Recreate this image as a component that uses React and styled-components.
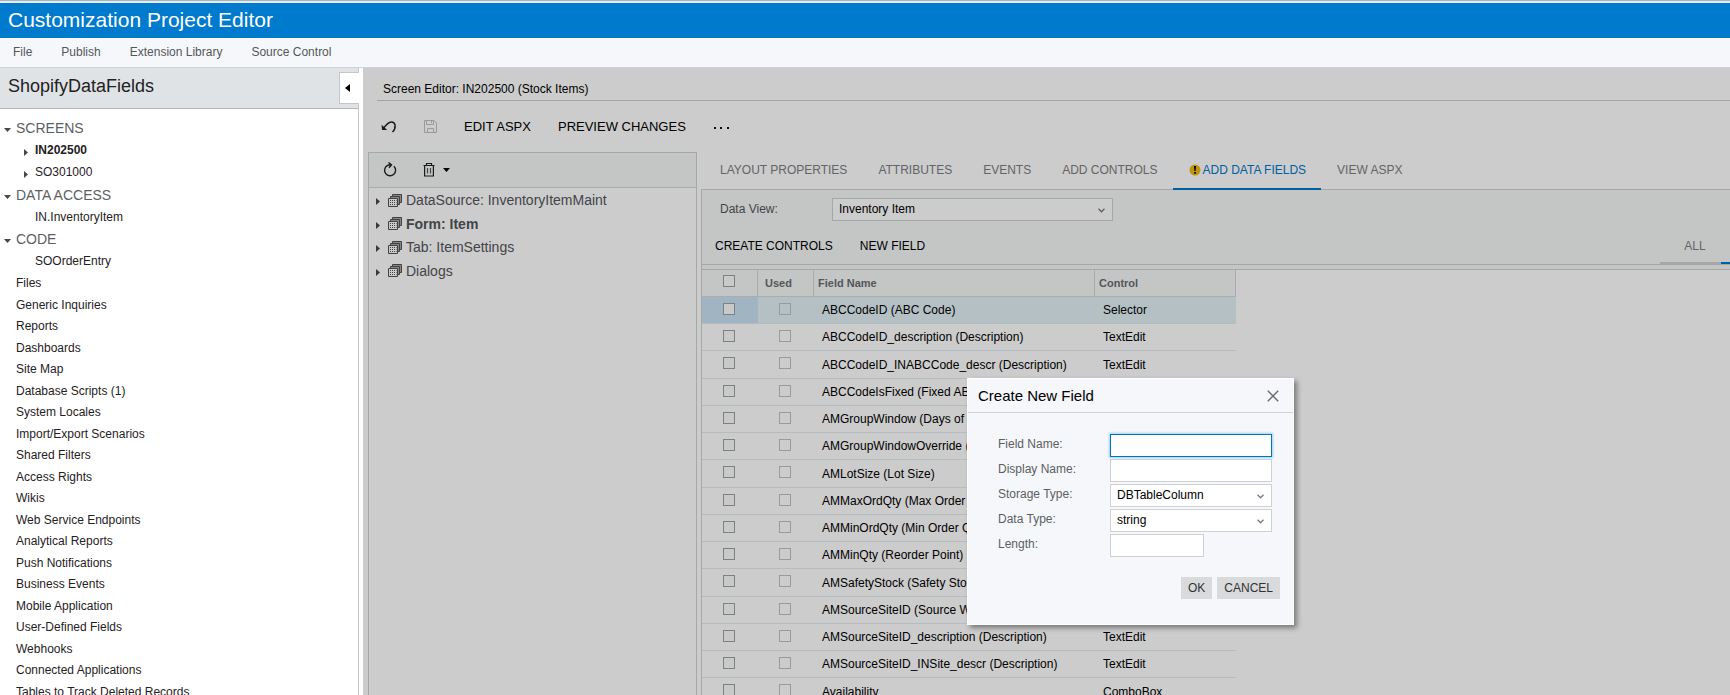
import React from 'react'
import styled, { createGlobalStyle } from 'styled-components';

const GlobalStyle = createGlobalStyle`
  * {
    box-sizing: border-box;
  }
  html, body, #root {
    height: 100%;
  }
  body {
    margin: 0;
    overflow: hidden;
    background: #ffffff;
    color: #000000;
    font-family: 'Liberation Sans', Arial, sans-serif;
    font-size: 12px;
  }
  button, input, select {
    font-family: inherit;
    font-size: inherit;
    color: inherit;
    border-radius: 0;
    outline: none;
  }
`;

const Page = styled.div`
  display: flex;
  flex-direction: column;
  height: 100vh;
  overflow: hidden;
  border-top: 1px solid #adb0b5;
`;

const TitleBar = styled.header`
  flex: none;
  height: 37px;
  padding: 0 8px;
  border-top: 2px solid #e2edf6;
  background: #007acc;
  color: #ffffff;
`;

const AppTitle = styled.h1`
  margin: 0;
  font-size: 21px;
  line-height: 34px;
  font-weight: 400;
`;

const MenuBar = styled.nav`
  flex: none;
  display: flex;
  gap: 29px;
  height: 30px;
  padding: 0 13px;
  border-bottom: 1px solid #d0d3d6;
  background: #f5f7fa;
`;

const MenuButton = styled.button`
  padding: 0 0 2px;
  border: 0;
  background: none;
  color: #555759;
`;

const Workspace = styled.div`
  flex: 1;
  display: flex;
  min-height: 0;
`;

const Sidebar = styled.aside`
  flex: none;
  width: 359px;
  margin-right: 4px;
  border-right: 1px solid #c4c7ca;
`;

const ProjectBar = styled.div`
  position: relative;
  height: 41px;
  padding: 0 8px;
  border-bottom: 1px solid #b4b7ba;
  background: #dfe3e6;
`;

const ProjectName = styled.h2`
  margin: 0;
  font-size: 18px;
  line-height: 36px;
  font-weight: 400;
  color: #1f2123;
`;

const CollapseButton = styled.button`
  position: absolute;
  top: 4px;
  right: -1px;
  display: flex;
  align-items: center;
  width: 20px;
  height: 32px;
  padding: 0 5px;
  border: 1px solid #c4c7ca;
  border-right: 0;
  background: #ffffff;
`;

const Nav = styled.ul`
  margin: 0;
  padding: 8px 0 0;
  list-style: none;
`;

const NavItem = styled.li`
  display: flex;
  align-items: center;
  height: ${({ $kind }) => ($kind === 'page' ? '21px' : '22px')};
  padding-left: ${({ $kind }) => ($kind === 'child' ? '24px' : '4px')};

  &:nth-child(even) {
    height: 22px;
  }
  &:nth-child(4) {
    height: 23px;
  }
`;

const NavArrow = styled.span`
  flex: none;
  display: flex;
  width: ${({ $kind }) => ($kind === 'child' ? '11px' : '12px')};
  padding-top: 4px;
`;

const NavLink = styled.a`
  font-size: ${({ $kind }) => ($kind === 'group' ? '14px' : '12px')};
  line-height: 20px;
  font-weight: ${({ $bold }) => ($bold ? 700 : 400)};
  color: ${({ $kind }) => ($kind === 'group' ? '#5c5f62' : '#1f2123')};
  text-decoration: none;
  white-space: nowrap;
`;

const Frame = styled.main`
  position: relative;
  flex: 1;
  min-width: 0;
  display: flex;
  flex-direction: column;
  padding-left: 5px;
  overflow: hidden;
  background: #ffffff;
`;

const ScreenTitle = styled.h3`
  flex: none;
  margin: 0 0 0 9px;
  padding: 10px 6px 0;
  height: 33px;
  border-bottom: 1px solid #cdcdcd;
  font-size: 12px;
  line-height: 22px;
  font-weight: 400;
`;

const Toolbar = styled.div`
  flex: none;
  display: flex;
  align-items: center;
  height: 51px;
  padding-left: 13px;
`;

const IconButton = styled.button`
  display: flex;
  align-items: center;
  gap: 8px;
  margin-right: 26px;
  padding: 0;
  border: 0;
  background: none;
`;

const ToolButton = styled.button`
  margin-right: 27px;
  padding: 0;
  border: 0;
  background: none;
  font-size: ${({ $size }) => $size || '12px'};
  line-height: 16px;
`;

const Columns = styled.div`
  flex: 1;
  display: flex;
  gap: 4px;
  min-height: 0;
`;

const TreePanel = styled.section`
  flex: none;
  width: 329px;
  border: 1px solid #cfd2d4;
  border-bottom: 0;
`;

const TreeToolbar = styled.div`
  display: flex;
  align-items: center;
  height: 35px;
  padding: 0 0 1px 14px;
  border-bottom: 1px solid #d4d7d9;
  background: #f5f8f8;
`;

const TreeList = styled.ul`
  margin: 0;
  padding: 0;
  list-style: none;
`;

const TreeItem = styled.li`
  display: flex;
  align-items: center;
  height: 24px;
  padding-left: 7px;
  font-size: 14px;
  font-weight: ${({ $bold }) => ($bold ? 700 : 400)};
  color: #53565a;

  &:nth-child(even) {
    height: 23px;
  }

  svg:first-child {
    margin-top: 3px;
  }
  svg:last-of-type {
    margin: 0 4px 0 8px;
  }
`;

const Editor = styled.section`
  flex: 1;
  min-width: 0;
  display: flex;
  flex-direction: column;
`;

/* the active tab's underline sits on the top border of the tab body */
const Tabs = styled.div`
  position: relative;
  z-index: 1;
  flex: none;
  display: flex;
  height: 38px;
  margin-bottom: -1px;
  padding-left: 3px;
`;

const Tab = styled.button`
  display: flex;
  align-items: center;
  gap: 2px;
  padding: 0 15px 0 16px;
  border: 0;
  border-bottom: ${({ $active }) => ($active ? '2px solid #0078c8' : '2px solid transparent')};
  background: none;
  color: ${({ $active }) => ($active ? '#0078c8' : '#7b7e81')};
`;

const TabBody = styled.div`
  flex: 1;
  min-height: 0;
  display: flex;
  flex-direction: column;
  border: 1px solid #cfd2d4;
  border-width: 1px 0 0 1px;
`;

const FilterRow = styled.div`
  flex: none;
  display: flex;
  align-items: center;
  height: 39px;
  padding-left: 18px;
  background: #f5f8f8;
`;

const FilterLabel = styled.label`
  width: 112px;
  padding-bottom: 2px;
  color: #53565a;
`;

const SelectBox = styled.div`
  position: relative;
  display: flex;
  width: ${({ $width }) => $width};

  svg {
    position: absolute;
    top: 50%;
    right: 8px;
    margin-top: -2px;
    pointer-events: none;
  }
`;

const Select = styled.select`
  appearance: none;
  width: 100%;
  height: 23px;
  padding: 0 6px 2px;
  border: 1px solid #cfd2d4;
  background: #ffffff;
  color: #000000;
`;

const GridToolbar = styled.div`
  flex: none;
  display: flex;
  align-items: center;
  height: 36px;
  padding-left: 13px;
  border-bottom: 1px solid #cfd2d4;
  background: #f5f8f8;

  ${ToolButton} {
    padding-bottom: 2px;
  }
`;

const Scopes = styled.div`
  display: flex;
  align-self: stretch;
  margin-left: auto;
`;

const Scope = styled.button`
  min-width: ${({ $active }) => ($active ? '9px' : '61px')};
  padding: 0 0 0 9px;
  border: 0;
  border-bottom: 2px solid ${({ $active }) => ($active ? '#0078c8' : '#cfd2d4')};
  background: none;
  color: #7b7e81;
`;

const GridArea = styled.div`
  flex: 1;
  min-height: 0;
  overflow: hidden;
  border-top: 4px solid #f5f8f8;
`;

const GridInner = styled.div`
  border-top: 1px solid #cfd2d4;
`;

const Grid = styled.table`
  width: 534px;
  table-layout: fixed;
  border-collapse: separate;
  border-spacing: 0;
`;

const HeadCell = styled.th`
  width: ${({ $width }) => $width};
  height: 27px;
  padding: ${({ $center }) => ($center ? '0 2px 5px 0' : '0 4px 1px')};
  border: 1px solid #d4d9db;
  border-width: 0 1px 1px 0;
  background: #f5f8f8;
  font-size: 11px;
  font-weight: 700;
  text-align: ${({ $center }) => ($center ? 'center' : 'left')};
  color: #6a6d70;
`;

const Row = styled.tr`
  height: 27px;
  background: ${({ $selected }) => ($selected ? '#e3f1f7' : '#ffffff')};

  &:nth-child(4n + 3) {
    height: 28px;
  }

  td:first-child {
    background: ${({ $selected }) => ($selected ? '#c8e2f2' : 'transparent')};
  }
`;

const Cell = styled.td`
  padding: ${({ $center }) => ($center ? '0 2px 3px 0' : '0 8px')};
  border-bottom: 1px solid #e0ecee;
  text-align: ${({ $center }) => ($center ? 'center' : 'left')};
  white-space: nowrap;
`;

const Check = styled.input`
  appearance: none;
  display: block;
  width: 12px;
  height: 12px;
  margin: 0 auto;
  border: 1px solid ${({ disabled }) => (disabled ? '#bfc2c4' : '#9ea1a3')};
  background: ${({ disabled }) => (disabled ? 'transparent' : '#fbfcfc')};
`;

const Dimmer = styled.div`
  position: absolute;
  z-index: 2;
  inset: 0;
  background: rgba(0, 0, 0, 0.2);
`;

const Dialog = styled.div`
  position: absolute;
  z-index: 3;
  top: 310px;
  left: 604px;
  width: 327px;
  padding-bottom: 25px;
  border: 1px solid #ffffff;
  background: #f5f7fa;
  box-shadow: 3px 3px 5px rgba(0, 0, 0, 0.4);
`;

const DialogHeader = styled.div`
  display: flex;
  align-items: center;
  justify-content: space-between;
  height: 34px;
  padding: 0 14px 0 10px;
  border-bottom: 1px solid #d0d3d6;
`;

const DialogTitle = styled.h4`
  margin: 0;
  font-size: 15px;
  font-weight: 400;
`;

const CloseButton = styled.button`
  display: flex;
  padding: 0;
  border: 0;
  background: none;
`;

const Form = styled.div`
  display: grid;
  grid-template-columns: 112px 162px;
  row-gap: 2px;
  padding: 21px 30px 0;
`;

const FieldLabel = styled.label`
  line-height: 21px;
  color: #5c5f62;
`;

const TextInput = styled.input`
  width: ${({ $width }) => $width || '100%'};
  height: 23px;
  padding: 0 6px;
  border: 1px solid #cdd0d3;
  background: #ffffff;

  &:focus {
    border-color: #0078b8;
    box-shadow: 0 0 2px 1px #9ed0f0;
  }
`;

const DialogButtons = styled.div`
  display: flex;
  justify-content: flex-end;
  gap: 5px;
  margin-top: 20px;
  padding-right: 13px;
`;

const DialogButton = styled.button`
  height: 22px;
  padding: 0 7px;
  border: 0;
  background: #d9dadb;
  color: #303234;
`;

const ArrowDown = ({ color = '#45484b' }) => (
  <svg width="7" height="4" viewBox="0 0 7 4"><path d="M0 0h7L3.5 4z" fill={color} /></svg>
)

const ArrowRight = () => (
  <svg width="4" height="7" viewBox="0 0 4 7"><path d="M0 0v7l4-3.5z" fill="#45484b" /></svg>
)

const ArrowLeft = () => (
  <svg width="5" height="8" viewBox="0 0 5 8"><path d="M5 0v8L0 4z" fill="#000" /></svg>
)

const Chevron = () => (
  <svg width="7" height="5" viewBox="0 0 7 5"><path d="M.5.8l3 3 3-3" fill="none" stroke="#77797b" strokeWidth="1.3" /></svg>
)

const UndoIcon = () => (
  <svg width="16" height="14" viewBox="0 0 16 14" fill="none" stroke="#222" strokeWidth="1.5">
    <path d="M2 9C4.500 5.500 7 2 10.200 2c4.600 0 5.300 6 1.300 10" />
    <path d="M.6 4.800L1 10h5.200z" fill="#222" stroke="none" />
  </svg>
)

const SaveIcon = () => (
  <svg width="15" height="15" viewBox="0 0 15 15" fill="none" stroke="#c0c0c0">
    <path d="M1.500 1.500h9.500l2.500 2.500v9.500h-12zM3.500 1.500v4h7v-4M4.500 13.500v-4h6v4M8.500 2v2" />
  </svg>
)

const RefreshIcon = () => (
  <svg width="14" height="15" viewBox="0 0 14 15" fill="none" stroke="#222" strokeWidth="1.400">
    <path d="M10.800 4.200A5.500 5.500 0 1 1 4.200 3.600C5.200 3 6 2.800 7.500 2.800M5.500.5l3 2.300-2.500 3" />
  </svg>
)

const TrashIcon = () => (
  <svg width="12" height="15" viewBox="0 0 12 15" fill="none" stroke="#222" strokeWidth="1.200">
    <path d="M.5 3.500h11M3.500 3.500v-2h5v2M1.600 3.500v10.500h8.800v-10.500" />
    <path d="M4.500 6v5.500M7.500 6v5.500" stroke="#555" />
  </svg>
)

const LayersIcon = () => (
  <svg width="14" height="13" viewBox="0 0 14 13" fill="none" stroke="#505356">
    <path d="M4.500 2.500v-2h9v8h-2M2.500 4.500v-2h9v8h-2" fill="#a5a8aa" />
    <path d="M.5 4.500h9v8h-9z" fill="#fff" />
    <path d="M2 6.500h6.500M2 8.500h6.500M2 10.500h6.500" strokeDasharray="1 1" />
  </svg>
)

const WarningIcon = () => (
  <svg width="12" height="12" viewBox="0 0 12 12">
    <circle cx="6" cy="6" r="5.500" fill="#f0b810" />
    <path d="M5 2h2l-.4 5H5.400zM5.200 8h1.600v1.800H5.200z" fill="#000" />
  </svg>
)

const CloseIcon = () => (
  <svg width="12" height="12" viewBox="0 0 12 12"><path d="M.8.8l10.400 10.400M11.200.8L.8 11.200" stroke="#6a6d70" strokeWidth="1.500" /></svg>
)

const DotsIcon = () => (
  <svg width="17" height="6" viewBox="0 0 17 6"><path d="M1 3h2v2H1zM7 3h2v2H7zM14 3h2v2h-2z" fill="#111" /></svg>
)

const menu = ['File', 'Publish', 'Extension Library', 'Source Control']

const navItems = [
  { kind: 'group', text: 'SCREENS' },
  { kind: 'child', text: 'IN202500', arrow: true, bold: true },
  { kind: 'child', text: 'SO301000', arrow: true },
  { kind: 'group', text: 'DATA ACCESS' },
  { kind: 'child', text: 'IN.InventoryItem' },
  { kind: 'group', text: 'CODE' },
  { kind: 'child', text: 'SOOrderEntry' },
  ...[
    'Files', 'Generic Inquiries', 'Reports', 'Dashboards', 'Site Map', 'Database Scripts (1)',
    'System Locales', 'Import/Export Scenarios', 'Shared Filters', 'Access Rights', 'Wikis',
    'Web Service Endpoints', 'Analytical Reports', 'Push Notifications', 'Business Events',
    'Mobile Application', 'User-Defined Fields', 'Webhooks', 'Connected Applications',
    'Tables to Track Deleted Records',
  ].map((text) => ({ kind: 'page', text })),
]

const treeItems = ['DataSource: InventoryItemMaint', 'Form: Item', 'Tab: ItemSettings', 'Dialogs']

const tabs = ['LAYOUT PROPERTIES', 'ATTRIBUTES', 'EVENTS', 'ADD CONTROLS', 'ADD DATA FIELDS', 'VIEW ASPX']

const fields = [
  ['ABCCodeID (ABC Code)', 'Selector'],
  ['ABCCodeID_description (Description)', 'TextEdit'],
  ['ABCCodeID_INABCCode_descr (Description)', 'TextEdit'],
  ['ABCCodeIsFixed (Fixed ABC Code)', 'CheckBox'],
  ['AMGroupWindow (Days of Supply)', 'NumberEdit'],
  ['AMGroupWindowOverride (Override)', 'CheckBox'],
  ['AMLotSize (Lot Size)', 'NumberEdit'],
  ['AMMaxOrdQty (Max Order Qty)', 'NumberEdit'],
  ['AMMinOrdQty (Min Order Qty)', 'NumberEdit'],
  ['AMMinQty (Reorder Point)', 'NumberEdit'],
  ['AMSafetyStock (Safety Stock)', 'NumberEdit'],
  ['AMSourceSiteID (Source Warehouse)', 'Selector'],
  ['AMSourceSiteID_description (Description)', 'TextEdit'],
  ['AMSourceSiteID_INSite_descr (Description)', 'TextEdit'],
  ['Availability', 'ComboBox'],
]

const FieldGrid = () => (
  <Grid>
    <thead>
      <tr>
        <HeadCell $width="56px" $center><Check type="checkbox" aria-label="Select all" /></HeadCell>
        <HeadCell $width="56px">&nbsp;Used</HeadCell>
        <HeadCell $width="281px">Field Name</HeadCell>
        <HeadCell>Control</HeadCell>
      </tr>
    </thead>
    <tbody>
      {fields.map(([name, control], i) => (
        <Row key={name} $selected={i === 0}>
          <Cell $center><Check type="checkbox" aria-label={`Select ${name}`} /></Cell>
          <Cell $center><Check type="checkbox" disabled aria-label={`${name} used`} /></Cell>
          <Cell>{name}</Cell>
          <Cell>{control}</Cell>
        </Row>
      ))}
    </tbody>
  </Grid>
)

const NewFieldDialog = () => (
  <Dialog role="dialog" aria-labelledby="dialog-title">
    <DialogHeader>
      <DialogTitle id="dialog-title">Create New Field</DialogTitle>
      <CloseButton aria-label="Close"><CloseIcon /></CloseButton>
    </DialogHeader>
    <Form>
      <FieldLabel htmlFor="fieldName">Field Name:</FieldLabel>
      <TextInput id="fieldName" autoFocus />
      <FieldLabel htmlFor="displayName">Display Name:</FieldLabel>
      <TextInput id="displayName" />
      <FieldLabel htmlFor="storageType">Storage Type:</FieldLabel>
      <SelectBox $width="100%">
        <Select id="storageType"><option>DBTableColumn</option></Select>
        <Chevron />
      </SelectBox>
      <FieldLabel htmlFor="dataType">Data Type:</FieldLabel>
      <SelectBox $width="100%">
        <Select id="dataType"><option>string</option></Select>
        <Chevron />
      </SelectBox>
      <FieldLabel htmlFor="length">Length:</FieldLabel>
      <TextInput id="length" $width="94px" />
    </Form>
    <DialogButtons>
      <DialogButton>OK</DialogButton>
      <DialogButton>CANCEL</DialogButton>
    </DialogButtons>
  </Dialog>
)

const App = () => (
  <Page>
    <GlobalStyle />
    <TitleBar><AppTitle>Customization Project Editor</AppTitle></TitleBar>
    <MenuBar>
      {menu.map((text) => <MenuButton key={text}>{text}</MenuButton>)}
    </MenuBar>
    <Workspace>
      <Sidebar>
        <ProjectBar>
          <ProjectName>ShopifyDataFields</ProjectName>
          <CollapseButton aria-label="Collapse"><ArrowLeft /></CollapseButton>
        </ProjectBar>
        <Nav>
          {navItems.map(({ kind, text, arrow, bold }) => (
            <NavItem key={text} $kind={kind}>
              <NavArrow $kind={kind}>
                {kind === 'group' && <ArrowDown />}
                {arrow && <ArrowRight />}
              </NavArrow>
              <NavLink href="#" $kind={kind} $bold={bold}>{text}</NavLink>
            </NavItem>
          ))}
        </Nav>
      </Sidebar>
      <Frame>
        <ScreenTitle>Screen Editor: IN202500 (Stock Items)</ScreenTitle>
        <Toolbar>
          <IconButton aria-label="Undo"><UndoIcon /></IconButton>
          <IconButton aria-label="Save"><SaveIcon /></IconButton>
          <ToolButton $size="13px">EDIT ASPX</ToolButton>
          <ToolButton $size="13px">PREVIEW CHANGES</ToolButton>
          <IconButton aria-label="More"><DotsIcon /></IconButton>
        </Toolbar>
        <Columns>
          <TreePanel>
            <TreeToolbar>
              <IconButton aria-label="Refresh"><RefreshIcon /></IconButton>
              <IconButton aria-label="Delete"><TrashIcon /><ArrowDown color="#000" /></IconButton>
            </TreeToolbar>
            <TreeList>
              {treeItems.map((text) => (
                <TreeItem key={text} $bold={text === 'Form: Item'}>
                  <ArrowRight />
                  <LayersIcon />
                  {text}
                </TreeItem>
              ))}
            </TreeList>
          </TreePanel>
          <Editor>
            <Tabs>
              {tabs.map((text) => (
                <Tab key={text} $active={text === 'ADD DATA FIELDS'}>
                  {text === 'ADD DATA FIELDS' && <WarningIcon />}
                  {text}
                </Tab>
              ))}
            </Tabs>
            <TabBody>
              <FilterRow>
                <FilterLabel htmlFor="dataView">Data View:</FilterLabel>
                <SelectBox $width="281px">
                  <Select id="dataView"><option>Inventory Item</option></Select>
                  <Chevron />
                </SelectBox>
              </FilterRow>
              <GridToolbar>
                <ToolButton>CREATE CONTROLS</ToolButton>
                <ToolButton>NEW FIELD</ToolButton>
                <Scopes>
                  <Scope>ALL</Scope>
                  <Scope $active aria-label="Custom" />
                </Scopes>
              </GridToolbar>
              <GridArea>
                <GridInner>
                  <FieldGrid />
                </GridInner>
              </GridArea>
            </TabBody>
          </Editor>
        </Columns>
        <Dimmer />
        <NewFieldDialog />
      </Frame>
    </Workspace>
  </Page>
)

export default App
